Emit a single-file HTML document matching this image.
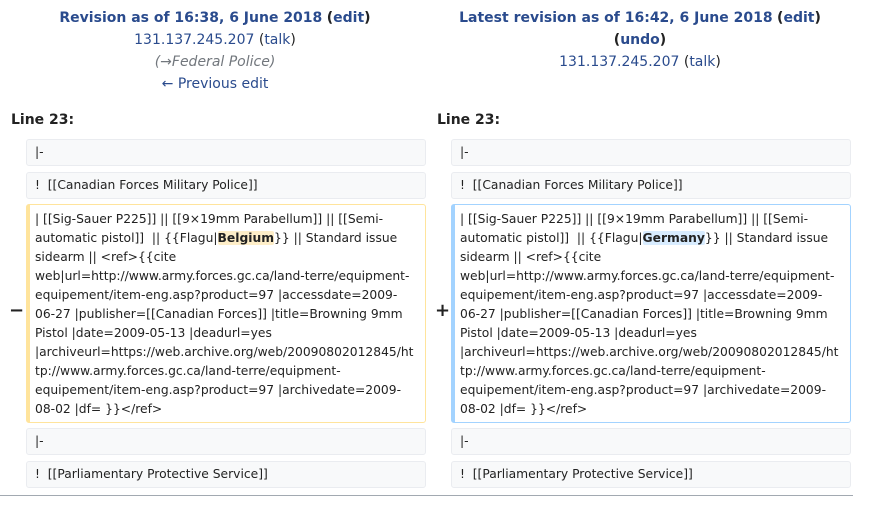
<!DOCTYPE html>
<html><head><meta charset="utf-8"><style>
body{margin:0;background:#fff;font-family:"DejaVu Sans","Liberation Sans",sans-serif;color:#222;width:874px;height:512px;overflow:hidden;position:relative}
.hd{position:absolute;text-align:center;font-size:14px;line-height:22px}
.hd a{color:#2a4b8d;text-decoration:none}
.b{font-weight:bold}
.gr{color:#72777d;font-style:italic}
.ln{position:absolute;top:112px;font-weight:bold;font-size:14px;color:#222}
.box{position:absolute;box-sizing:border-box;background:#f8f9fa;border:1px solid #eaecf0;border-radius:3px;font-size:12.3px;line-height:19px;padding:3px 0 3px 8px;white-space:pre}
.del{background:#fff;border:1px solid #ffe49c;border-left:4px solid #ffe49c}
.add{background:#fff;border:1px solid #a3d3ff;border-left:4px solid #a3d3ff}
.hl1{background:#feeec8;font-weight:bold;border-radius:2px}
.hl2{background:#d8ecff;font-weight:bold;border-radius:2px}
.mk{position:absolute;font-size:18px;font-weight:bold}
hr{position:absolute;left:0;top:495px;width:853px;margin:0;border:0;border-top:1px solid #a2a9b1}
</style></head><body>
<div class="hd" style="left:-5px;width:440px;top:7px"><a class="b" href="#">Revision as of 16:38, 6 June 2018</a> <span class="b">(<a href="#">edit</a>)</span><br><a href="#">131.137.245.207</a> (<a href="#">talk</a>)<br><span class="gr">(→Federal Police)</span><br><a href="#">← Previous edit</a></div>
<div class="hd" style="left:430px;width:420px;top:7px"><a class="b" href="#">Latest revision as of 16:42, 6 June 2018</a> <span class="b">(<a href="#">edit</a>)</span><br><span class="b">(<a href="#">undo</a>)</span><br><a href="#">131.137.245.207</a> (<a href="#">talk</a>)</div>
<div class="ln" style="left:11px">Line 23:</div>
<div class="ln" style="left:437px">Line 23:</div>

<div class="box" style="left:26px;top:139px;width:400px;height:27px">|-</div>
<div class="box" style="left:26px;top:172px;width:400px;height:27px">!  [[Canadian Forces Military Police]]</div>
<div class="box del" style="left:26px;top:204px;width:400px;height:219px;padding-left:5px;padding-top:5px">| [[Sig-Sauer P225]] || [[9×19mm Parabellum]] || [[Semi-
automatic pistol]]  || {{Flagu|<span class="hl1">Belgium</span>}} || Standard issue
sidearm || &lt;ref&gt;{{cite
web|url=http://www.army.forces.gc.ca/land-terre/equipment-
equipement/item-eng.asp?product=97 |accessdate=2009-
06-27 |publisher=[[Canadian Forces]] |title=Browning 9mm
Pistol |date=2009-05-13 |deadurl=yes
|archiveurl=https://web.archive.org/web/20090802012845/ht
tp://www.army.forces.gc.ca/land-terre/equipment-
equipement/item-eng.asp?product=97 |archivedate=2009-
08-02 |df= }}&lt;/ref&gt;</div>
<div class="box" style="left:26px;top:428px;width:400px;height:27px">|-</div>
<div class="box" style="left:26px;top:461px;width:400px;height:27px">!  [[Parliamentary Protective Service]]</div>
<div class="mk" style="left:9px;top:300px">−</div>

<div class="box" style="left:451px;top:139px;width:400px;height:27px">|-</div>
<div class="box" style="left:451px;top:172px;width:400px;height:27px">!  [[Canadian Forces Military Police]]</div>
<div class="box add" style="left:451px;top:204px;width:400px;height:219px;padding-left:5px;padding-top:5px">| [[Sig-Sauer P225]] || [[9×19mm Parabellum]] || [[Semi-
automatic pistol]]  || {{Flagu|<span class="hl2">Germany</span>}} || Standard issue
sidearm || &lt;ref&gt;{{cite
web|url=http://www.army.forces.gc.ca/land-terre/equipment-
equipement/item-eng.asp?product=97 |accessdate=2009-
06-27 |publisher=[[Canadian Forces]] |title=Browning 9mm
Pistol |date=2009-05-13 |deadurl=yes
|archiveurl=https://web.archive.org/web/20090802012845/ht
tp://www.army.forces.gc.ca/land-terre/equipment-
equipement/item-eng.asp?product=97 |archivedate=2009-
08-02 |df= }}&lt;/ref&gt;</div>
<div class="box" style="left:451px;top:428px;width:400px;height:27px">|-</div>
<div class="box" style="left:451px;top:461px;width:400px;height:27px">!  [[Parliamentary Protective Service]]</div>
<div class="mk" style="left:435px;top:300px">+</div>
<hr>
</body></html>
